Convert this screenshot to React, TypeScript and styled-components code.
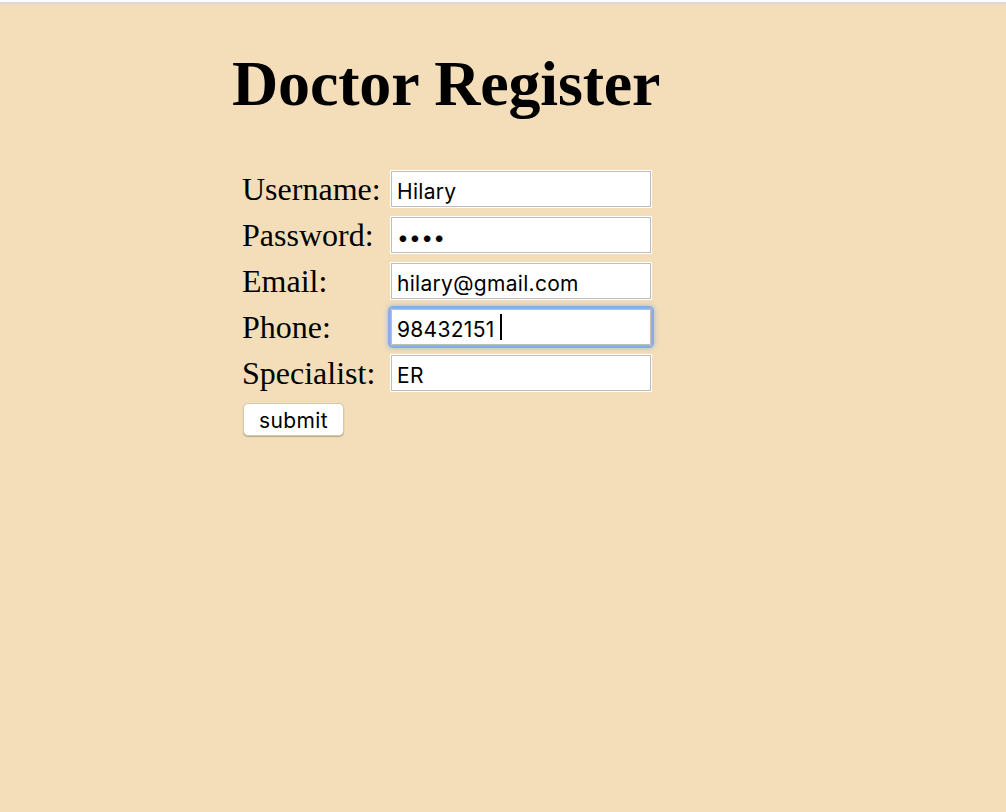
import React from "react";
import styled, { createGlobalStyle, css } from "styled-components";

const GlobalStyle = createGlobalStyle`
  html, body {
    margin: 0;
    padding: 0;
    background: #f3deb9;
  }
  body {
    font-family: "Liberation Serif", "Times New Roman", serif;
    color: #000;
  }
`;

const TopBar = styled.div`
  height: 2px;
  background: #ffffff;
  border-bottom: 2px solid #dcd8d8;
`;

const Page = styled.div`
  min-height: 808px;
  padding: 43px 0 0 232px;
  box-sizing: border-box;
`;

const Title = styled.h1`
  margin: 0;
  font-size: 64px;
  font-weight: 700;
  line-height: 74px;
  letter-spacing: -0.15px;
`;

const Form = styled.form`
  margin: 49px 0 0 10px;
  display: flex;
  flex-direction: column;
  gap: 8px;
`;

const Row = styled.div`
  display: flex;
  align-items: center;
  height: 38px;
`;

const Label = styled.label`
  width: 148px;
  font-size: 32px;
  line-height: 36px;
  white-space: nowrap;
`;

const FieldWrap = styled.div<{ $focused?: boolean }>`
  position: relative;
  width: 262px;
  height: 38px;
  box-sizing: border-box;
  border: 1px solid #ffffff;
  ${(p) =>
    p.$focused &&
    css`
      border-color: #8fb4ea;
      border-radius: 3px;
      box-shadow: 0 0 0 2px #86ace6, 0 0 4px 3px rgba(126, 168, 230, 0.5);
    `}
`;

const Input = styled.input`
  width: 100%;
  height: 100%;
  box-sizing: border-box;
  border: 1px solid #bdbdbd;
  background: #fff;
  padding: 4px 5px 0;
  font-family: Inter, "Liberation Sans", Arial, sans-serif;
  font-size: 21px;
  letter-spacing: 0.3px;
  color: #000;
  outline: none;
  caret-color: transparent;
`;

const Caret = styled.span<{ $left: number }>`
  position: absolute;
  top: 5px;
  left: ${(p) => p.$left}px;
  width: 2px;
  height: 26px;
  background: #000;
`;

const SubmitButton = styled.button`
  margin-top: 3px;
  margin-left: 1px;
  align-self: flex-start;
  width: 101px;
  height: 33px;
  background: #fff;
  border: 1px solid #d2c8b6;
  border-radius: 5px;
  box-shadow: 0 1px 1px rgba(0, 0, 0, 0.25);
  font-family: Inter, "Liberation Sans", Arial, sans-serif;
  font-size: 21px;
  letter-spacing: 0.4px;
  color: #000;
  padding: 1px 0 0;
`;

type Field = {
  label: string;
  value: string;
  type?: string;
  focused?: boolean;
};

const fields: Field[] = [
  { label: "Username:", value: "Hilary" },
  { label: "Password:", value: "xxxx", type: "password" },
  { label: "Email:", value: "hilary@gmail.com" },
  { label: "Phone:", value: "98432151", focused: true },
  { label: "Specialist:", value: "ER" },
];

const App = () => (
  <>
    <GlobalStyle />
    <TopBar />
    <Page>
      <Title>Doctor Register</Title>
      <Form onSubmit={(e) => e.preventDefault()}>
        {fields.map((f) => (
          <Row key={f.label}>
            <Label>{f.label}</Label>
            <FieldWrap $focused={f.focused}>
              <Input type={f.type || "text"} defaultValue={f.value} readOnly />
              {f.focused && <Caret $left={109} />}
            </FieldWrap>
          </Row>
        ))}
        <SubmitButton type="submit">submit</SubmitButton>
      </Form>
    </Page>
  </>
);

export default App;
